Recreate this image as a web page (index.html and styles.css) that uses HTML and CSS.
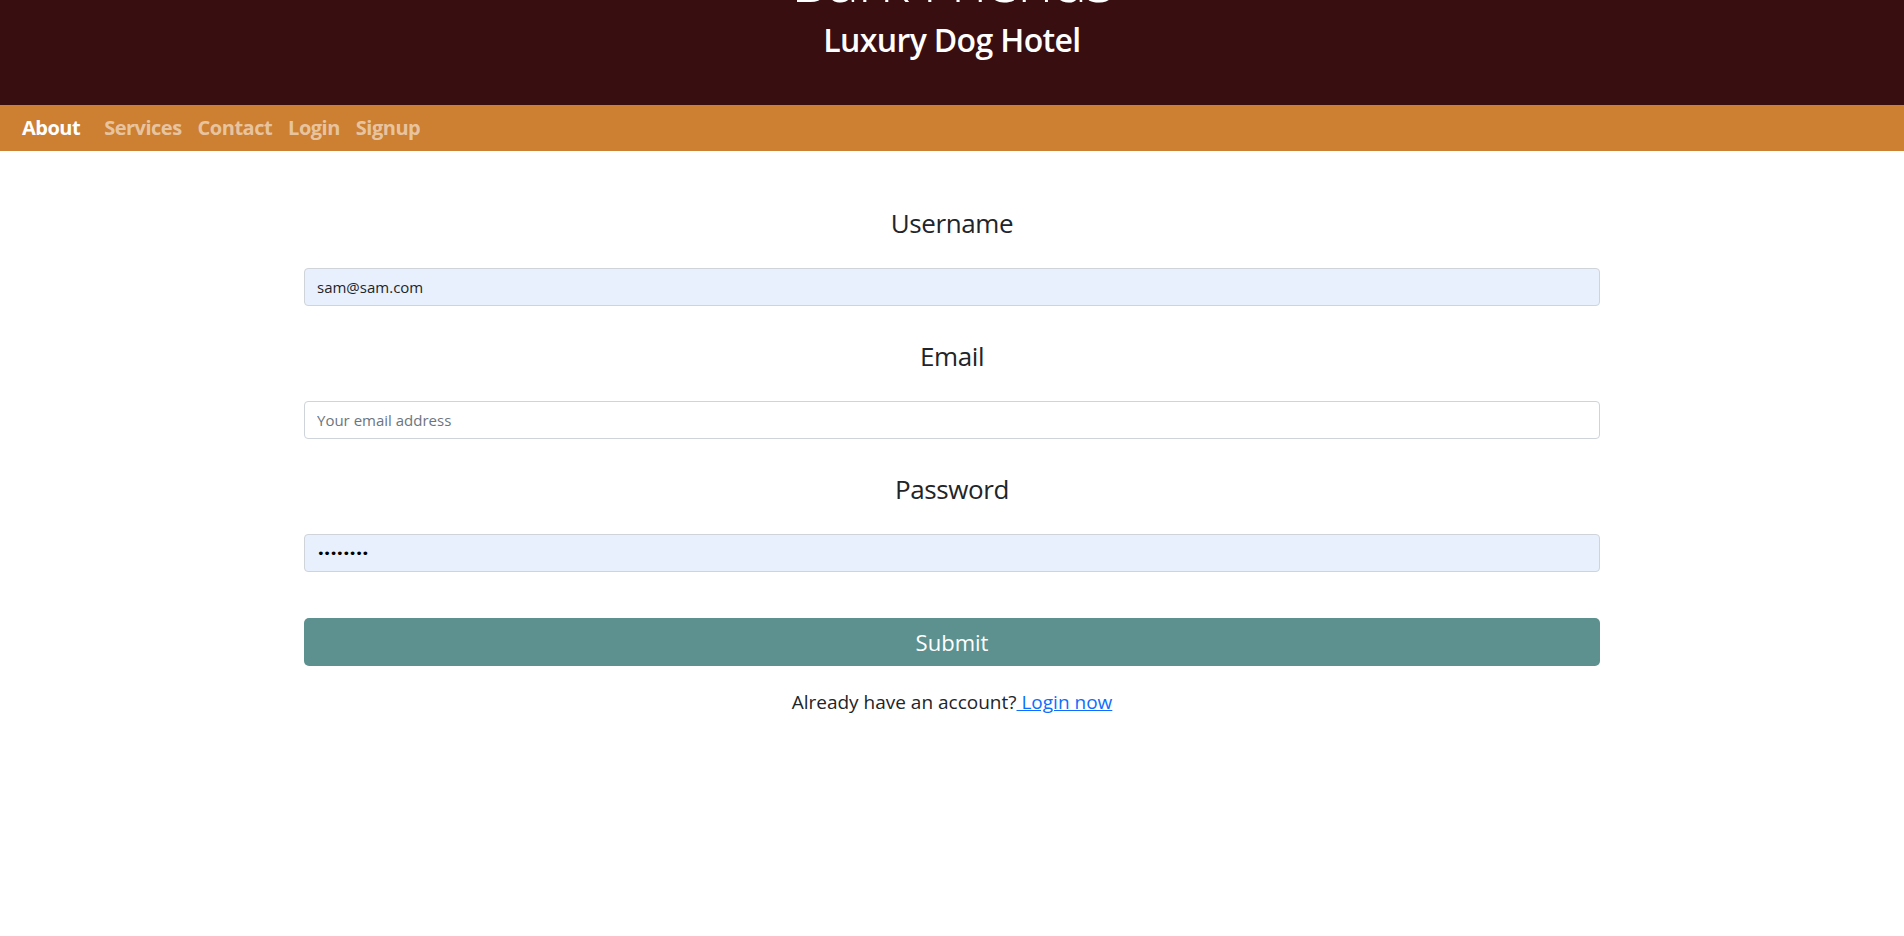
FILE: index.html
```html
<!DOCTYPE html>
<html lang="en">
<head>
<meta charset="utf-8">
<title>Bark Friends - Signup</title>
<link rel="stylesheet" href="styles.css">
</head>
<body>
<header class="hero">
  <h1 class="hero-title">Bark Friends</h1>
  <h2 class="hero-sub">Luxury Dog Hotel</h2>
</header>
<nav class="navbar">
  <a class="brand" href="#">About</a>
  <a class="nav-link" href="#">Services</a>
  <a class="nav-link" href="#">Contact</a>
  <a class="nav-link" href="#">Login</a>
  <a class="nav-link" href="#">Signup</a>
</nav>
<main class="container">
  <form class="signup">
    <div class="group">
      <label class="label" for="username">Username</label>
      <input class="field autofilled" id="username" type="text" value="sam@sam.com">
    </div>
    <div class="group">
      <label class="label" for="email">Email</label>
      <input class="field" id="email" type="email" placeholder="Your email address">
    </div>
    <div class="group">
      <label class="label" for="password">Password</label>
      <input class="field autofilled pw" id="password" type="password" value="password">
    </div>
    <button class="submit" type="button">Submit</button>
    <p class="switch">Already have an account?<a href="#"> Login now</a></p>
  </form>
</main>
</body>
</html>
```

FILE: styles.css
```css
* { box-sizing: border-box; }

html, body {
  margin: 0;
  padding: 0;
  background: #ffffff;
}

body {
  font-family: "Open Sans", "Noto Sans", "DejaVu Sans", sans-serif;
  color: #212529;
  overflow: hidden;
}

.hero {
  background: #380e10;
  color: #ffffff;
  text-align: center;
  padding-bottom: 46px;
}

.hero-title {
  margin: -57px 0 6px;
  font-size: 60px;
  font-weight: 300;
  line-height: 72px;
  letter-spacing: -0.02em;
}

.hero-sub {
  margin: 0;
  font-size: 32px;
  font-weight: 600;
  line-height: 38px;
  letter-spacing: -0.02em;
}

.navbar {
  background: #cd7f32;
  height: 46px;
  display: flex;
  align-items: center;
  padding-left: 22px;
}

.navbar a {
  text-decoration: none;
  font-size: 20px;
  font-weight: 700;
  letter-spacing: -0.025em;
  line-height: 30px;
}

.brand {
  color: #ffffff;
  margin-right: 16px;
}

.nav-link {
  color: rgba(255, 255, 255, 0.55);
  padding: 0 8px;
}

.container {
  width: 1320px;
  margin: 0 auto;
  padding: 53px 12px 0;
}

.signup {
  display: flex;
  flex-direction: column;
}

.group {
  display: flex;
  flex-direction: column;
  margin-bottom: 31px;
}

.label {
  text-align: center;
  font-size: 26px;
  line-height: 39px;
  letter-spacing: -0.015em;
  margin-bottom: 25px;
}

.field {
  height: 38px;
  width: 100%;
  border: 1px solid #ced4da;
  border-radius: 4px;
  padding: 0 12px;
  font-family: "Open Sans", "Noto Sans", sans-serif;
  font-size: 15px;
  color: #212529;
  background: #ffffff;
  outline: none;
}

.field::placeholder {
  color: #6c757d;
  opacity: 1;
}

.autofilled {
  background: #e8f0fe;
}

.pw {
  font-family: "DejaVu Sans", sans-serif;
  font-size: 13px;
  letter-spacing: -1.3px;
  color: #000000;
}

.group:last-of-type {
  margin-bottom: 46px;
}

.submit {
  height: 48px;
  width: 100%;
  border: none;
  border-radius: 5px;
  background: #5c918f;
  color: #ffffff;
  font-family: "Open Sans", "Noto Sans", sans-serif;
  font-size: 22px;
  cursor: pointer;
}

.switch {
  margin: 21px 0 0;
  text-align: center;
  font-size: 19px;
  line-height: 30px;
}

.switch a {
  color: #0d6efd;
  text-decoration: underline;
}
```
